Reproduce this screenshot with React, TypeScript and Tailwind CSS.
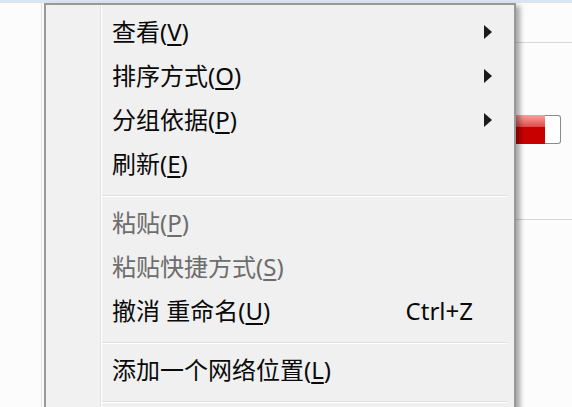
import React from "react";

type Item =
  | { kind: "sep" }
  | {
      kind: "item";
      label: string;
      key: string;
      disabled?: boolean;
      arrow?: boolean;
      shortcut?: string;
    };

const items: Item[] = [
  { kind: "item", label: "查看", key: "V", arrow: true },
  { kind: "item", label: "排序方式", key: "O", arrow: true },
  { kind: "item", label: "分组依据", key: "P", arrow: true },
  { kind: "item", label: "刷新", key: "E" },
  { kind: "sep" },
  { kind: "item", label: "粘贴", key: "P", disabled: true },
  { kind: "item", label: "粘贴快捷方式", key: "S", disabled: true },
  { kind: "item", label: "撤消 重命名", key: "U", shortcut: "Ctrl+Z" },
  { kind: "sep" },
  { kind: "item", label: "添加一个网络位置", key: "L" },
  { kind: "sep" },
];

function Arrow() {
  return (
    <svg width="8" height="14" viewBox="0 0 8 14" className="block">
      <polygon points="0,0 8,7 0,14" fill="#1a1a1a" />
    </svg>
  );
}

export default function App() {
  return (
    <div
      className="relative w-[572px] h-[407px] overflow-hidden bg-[#fcfcfc]"
      style={{ fontFamily: '"Noto Sans", "Noto Sans CJK SC", sans-serif' }}
    >
      {/* background page */}
      <div className="h-[3px] bg-[#dbe5ef]" />
      <div className="flex h-[404px]">
        <div className="w-[42px] border-r border-[#e2e2e2]" />
        <div className="flex-1" />
        <div className="w-[56px] flex flex-col">
          <div className="h-[40px] border-b border-[#d8d8d8]" />
          <div className="h-[72px]" />
          <div className="flex h-[29px] w-[45px]">
            <div className="w-[29px] flex flex-col">
              <div className="h-[12px] bg-gradient-to-b from-[#f7a0a0] to-[#e04848]" />
              <div className="flex-1 bg-[#c80000]" />
            </div>
            <div className="flex-1 bg-white border-y border-r border-[#8a8a8a] rounded-r-[3px]" />
          </div>
          <div className="h-[76px] border-b border-[#d8d8d8]" />
        </div>
      </div>

      {/* context menu */}
      <div className="absolute left-[44px] top-[3px] w-[472px] h-[420px] border-l-2 border-t-2 border-r-2 border-[#999999] shadow-[4px_3px_5px_rgba(0,0,0,0.35)] flex bg-[#f0f0f0]">
        <div className="w-[55px] bg-[#f1f1f1] border-r border-[#e2e3e3]" />
        <div className="w-px bg-white" />
        <div className="flex-1 pt-[5px] flex flex-col">
          {items.map((it, i) =>
            it.kind === "sep" ? (
              <div key={i} className="h-[15px] pt-[9px] pr-[7px]">
                <div className="h-px bg-[#dedede]" />
                <div className="h-px bg-white" />
              </div>
            ) : (
              <div
                key={i}
                className={
                  "h-[44px] flex items-center pl-[10px] pr-[22px] text-[24px] leading-none " +
                  (it.disabled ? "text-[#6d6d6d]" : "text-[#0a0a0a]")
                }
              >
                <span className="flex-1 whitespace-pre">
                  {it.label}(
                  <span className="underline decoration-[1.5px] underline-offset-[3px]">
                    {it.key}
                  </span>
                  )
                </span>
                {it.shortcut && <span className="text-[24px]">{it.shortcut}</span>}
                <span className="w-[19px] flex justify-end">
                  {it.arrow && <Arrow />}
                </span>
              </div>
            )
          )}
        </div>
      </div>
    </div>
  );
}
